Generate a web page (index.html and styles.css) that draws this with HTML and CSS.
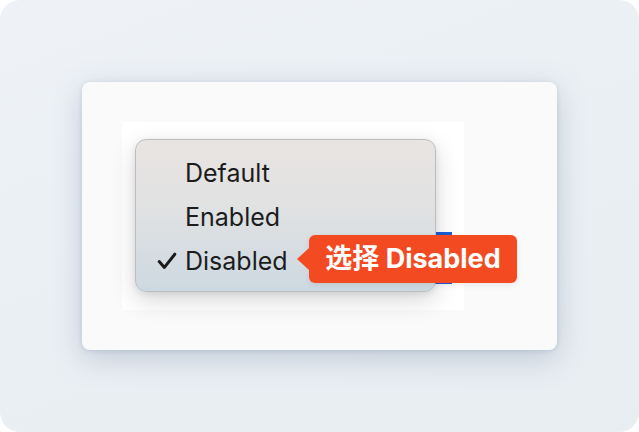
FILE: index.html
```html
<!DOCTYPE html>
<html lang="zh-CN">
<head>
  <meta charset="UTF-8">
  <meta name="viewport" content="width=device-width, initial-scale=1.0">
  <title>选择 Disabled</title>
  <link rel="stylesheet" href="styles.css">
</head>
<body>
  <main class="stage">
    <section class="card">
      <div class="canvas">
        <!-- botón azul que queda detrás del menú -->
        <span class="button-behind"></span>
        <ul class="menu" role="menu">
          <li class="menu-item" role="menuitem">Default</li>
          <li class="menu-item" role="menuitem">Enabled</li>
          <li class="menu-item is-checked" role="menuitem">
            <svg class="check" viewBox="0 0 20 18" width="20" height="18" aria-hidden="true">
              <path d="M2.2 9.6 L7.4 15.4 L17.8 2.2" fill="none" stroke="#1a1a1a" stroke-width="3" stroke-linecap="round" stroke-linejoin="round"/>
            </svg>
            Disabled
          </li>
        </ul>
        <div class="tip">选择 Disabled</div>
      </div>
    </section>
  </main>
</body>
</html>
```

FILE: styles.css
```css
:root {
  --color-stage: #ecf0f5;
  --color-card: #fafafa;
  --color-text: #1c1c1c;
  --color-accent: #f44a22;
  --color-blue: #1d5fd8;
}
* {
  margin: 0;
  padding: 0;
  box-sizing: border-box;
}
body {
  background: #ffffff;
  font-family: "Inter", "Noto Sans CJK SC", sans-serif;
}
.stage {
  width: 639px;
  height: 432px;
  padding: 82px;
  border-radius: 20px;
  background: linear-gradient(160deg, #eef2f6 0%, #e8edf2 100%);
}
.card {
  width: 100%;
  height: 100%;
  padding: 40px;
  background-color: var(--color-card);
  border-radius: 8px;
  box-shadow: 0 8px 30px rgba(70, 95, 130, 0.26), 0 1px 4px rgba(70, 95, 130, 0.16);
}
.canvas {
  position: relative;
  width: 342px;
  height: 188px;
  padding: 17px 0 0 13px;
  background-color: #ffffff;
}
.button-behind {
  position: absolute;
  left: 311px;
  top: 110px;
  width: 19px;
  height: 52px;
  background-color: var(--color-blue);
}
.menu {
  position: relative;
  width: 301px;
  height: 153px;
  padding: 11px 0 0 49px;
  list-style: none;
  border: 1px solid #bdbdbf;
  border-radius: 11px;
  background: linear-gradient(180deg, #e8e4e2 0%, #e2e2e2 40%, #cdd9e1 100%);
  box-shadow: 0 8px 24px rgba(0, 0, 0, 0.16), 0 2px 6px rgba(0, 0, 0, 0.08);
}
.menu-item {
  position: relative;
  height: 44px;
  line-height: 44px;
  font-size: 25px;
  color: var(--color-text);
}
.check {
  position: absolute;
  left: -28px;
  top: 13px;
}
.tip {
  position: absolute;
  left: 187px;
  top: 113px;
  width: 208px;
  height: 48px;
  border-radius: 6px;
  background-color: var(--color-accent);
  color: #ffffff;
  font-size: 27px;
  font-weight: 700;
  line-height: 48px;
  text-align: center;
  box-shadow: 0 2px 6px rgba(0, 0, 0, 0.08);
}
.tip::before {
  content: "";
  position: absolute;
  left: -12px;
  top: 13px;
  border-style: solid;
  border-width: 11px 12px 11px 0;
  border-color: transparent var(--color-accent) transparent transparent;
}
```
